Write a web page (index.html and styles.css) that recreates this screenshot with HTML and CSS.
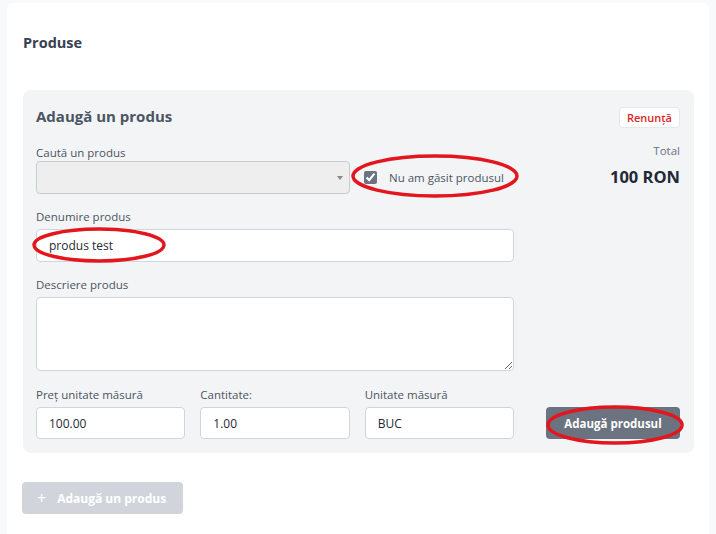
FILE: index.html
```html
<!DOCTYPE html>
<html lang="ro">
  <head>
    <meta charset="UTF-8" />
    <meta name="viewport" content="width=device-width, initial-scale=1.0" />
    <title>Produse</title>
    <link rel="stylesheet" href="styles.css">
  </head>
  <body>
    <div class="card">
      <h2 class="card-title">Produse</h2>

      <div class="panel">
        <div class="panel-head">
          <h3 class="panel-title">Adaugă un produs</h3>
          <button class="btn-cancel">Renunță</button>
        </div>

        <div class="form-grid">
          <div class="search-field">
            <label class="label label-tight">Caută un produs</label>
            <div class="search-row">
              <div class="fake-select"><span class="caret"></span></div>
              <label class="check">
                <input type="checkbox" checked />
                <span>Nu am găsit produsul</span>
              </label>
            </div>
          </div>

          <div class="total">
            <div class="total-label">Total</div>
            <div class="total-value">100 RON</div>
          </div>

          <div class="field field-name">
            <label class="label">Denumire produs</label>
            <input class="input" type="text" value="produs test" />
          </div>

          <div class="field field-desc">
            <label class="label">Descriere produs</label>
            <textarea class="input textarea"></textarea>
          </div>

          <div class="price-row">
            <div class="field">
              <label class="label">Preț unitate măsură</label>
              <input class="input input-sm" type="text" value="100.00" />
            </div>
            <div class="field">
              <label class="label">Cantitate:</label>
              <input class="input input-sm" type="text" value="1.00" />
            </div>
            <div class="field">
              <label class="label">Unitate măsură</label>
              <input class="input input-sm" type="text" value="BUC" />
            </div>
          </div>

          <button class="btn-submit">Adaugă produsul</button>
        </div>
      </div>

      <button class="btn-add"><span class="plus">+</span> Adaugă un produs</button>
    </div>

    <!-- red annotation marks -->
    <svg class="marks" width="716" height="534" viewBox="0 0 716 534">
      <ellipse cx="435" cy="176" rx="82" ry="20" />
      <ellipse cx="99" cy="245" rx="65" ry="16" />
      <ellipse cx="615" cy="425" rx="67" ry="18" />
    </svg>
  </body>
</html>
```

FILE: styles.css
```css
body {
  font-family: "Open Sans", "Liberation Sans", sans-serif;
  margin: 0;
  padding: 3px 7px 0;
  background-color: #f8f9fb;
  color: #4b5563;
  height: 531px;
  overflow: hidden;
}

.card {
  background-color: #fff;
  border-radius: 6px;
  padding: 30px 15px 40px 16px;
}

.card-title {
  margin: 0 0 37px;
  font-size: 14.5px;
  line-height: 20px;
  font-weight: 700;
  color: #374151;
}

/* panel */

.panel {
  background-color: #f3f4f6;
  border-radius: 8px;
  padding: 15px 14px 14px 13px;
}

.panel-head {
  display: flex;
  justify-content: space-between;
  align-items: center;
  height: 22px;
  margin-bottom: 18px;
}

.panel-title {
  margin: 0;
  font-size: 15px;
  font-weight: 700;
  color: #4b5563;
}

.btn-cancel {
  font-family: inherit;
  font-size: 11px;
  font-weight: 600;
  color: #dc2626;
  background-color: #fff;
  border: 1px solid #e5e7eb;
  border-radius: 4px;
  height: 21px;
  padding: 0 7px;
  margin-top: 2px;
}

.form-grid {
  display: grid;
  grid-template-columns: 478px 1fr;
  column-gap: 32px;
  row-gap: 15px;
}

.label {
  display: block;
  font-size: 11.5px;
  line-height: 16px;
  margin-bottom: 4px;
  color: #4b5563;
}

.label-tight {
  margin-bottom: 0;
}

.search-field {
  grid-column: 1;
  grid-row: 1;
}

.search-row {
  display: flex;
  align-items: center;
}

.fake-select {
  position: relative;
  width: 314px;
  height: 33px;
  box-sizing: border-box;
  background-color: #eeeeee;
  border: 1px solid #c9cbcf;
  border-radius: 4px;
}

.caret {
  position: absolute;
  right: 6px;
  top: 14px;
  border-left: 3.5px solid transparent;
  border-right: 3.5px solid transparent;
  border-top: 4px solid #888;
}

.check {
  display: flex;
  align-items: center;
  margin-left: 14px;
  font-size: 11.5px;
  color: #4b5563;
}

.check input {
  width: 13px;
  height: 13px;
  margin: 0 12px 0 0;
  accent-color: #6b7280;
}

.total {
  grid-column: 2;
  grid-row: 1;
  text-align: right;
  margin-top: -2px;
}

.total-label {
  font-size: 11.5px;
  line-height: 16px;
  color: #6b7280;
}

.total-value {
  margin-top: 7px;
  font-size: 16.5px;
  line-height: 22px;
  font-weight: 700;
  color: #1f2937;
}

.field-name {
  grid-column: 1;
  grid-row: 2;
}

.field-desc {
  grid-column: 1;
  grid-row: 3;
}

.input {
  display: block;
  width: 100%;
  height: 33px;
  box-sizing: border-box;
  border: 1px solid #d1d5db;
  border-radius: 4px;
  background-color: #fff;
  padding: 0 12px;
  font-family: inherit;
  font-size: 12px;
  color: #1f2937;
}

.input-sm {
  height: 32px;
}

.textarea {
  height: 74px;
  padding: 8px 12px;
  resize: vertical;
}

.price-row {
  grid-column: 1;
  grid-row: 4;
  display: grid;
  grid-template-columns: repeat(3, 1fr);
  column-gap: 15px;
  margin-top: 1px;
}

.btn-submit {
  grid-column: 2;
  grid-row: 4;
  align-self: end;
  height: 32px;
  border: none;
  border-radius: 4px;
  background-color: #6b7280;
  color: #fff;
  font-family: inherit;
  font-size: 11.5px;
  font-weight: 700;
}

.btn-add {
  display: flex;
  align-items: center;
  margin-top: 29px;
  margin-left: -1px;
  width: 161px;
  height: 32px;
  border: none;
  border-radius: 4px;
  background-color: #d1d5db;
  color: #fff;
  font-family: inherit;
  font-size: 12px;
  font-weight: 700;
  padding: 0 0 0 15px;
}

.plus {
  font-size: 16px;
  font-weight: 400;
  margin-right: 11px;
  line-height: 1;
}

.marks {
  position: absolute;
  left: 0;
  top: 0;
  pointer-events: none;
}

.marks ellipse {
  fill: none;
  stroke: #e3161d;
  stroke-width: 3.5;
}
```
